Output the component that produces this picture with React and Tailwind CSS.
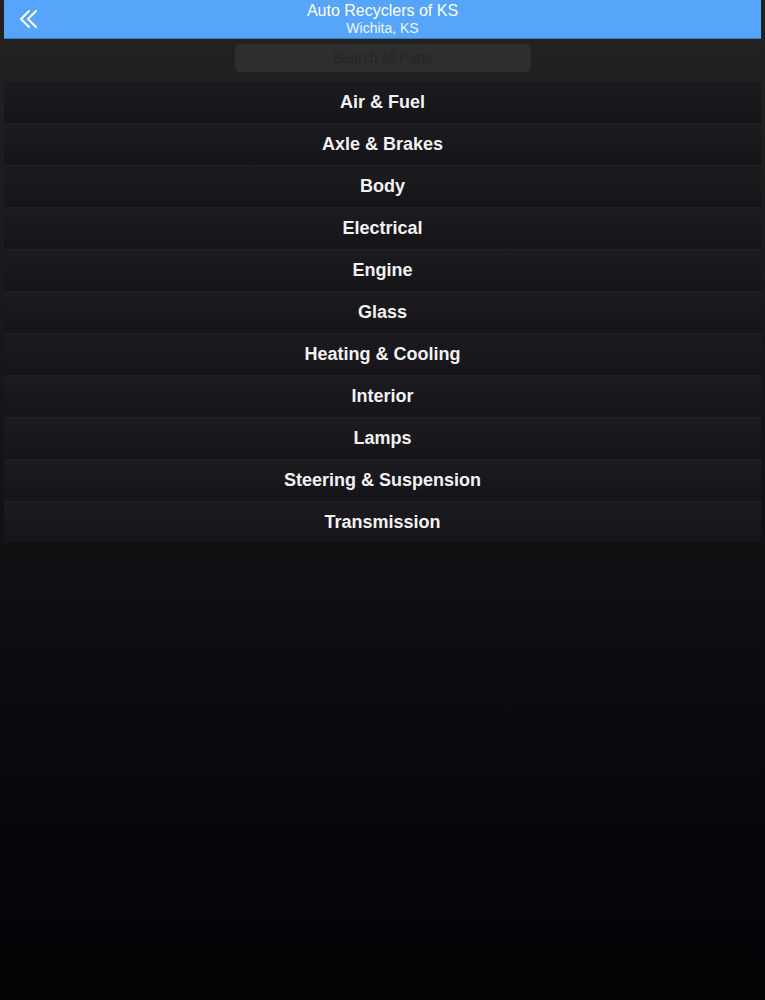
import React from 'react';

const categories = [
  'Air & Fuel',
  'Axle & Brakes',
  'Body',
  'Electrical',
  'Engine',
  'Glass',
  'Heating & Cooling',
  'Interior',
  'Lamps',
  'Steering & Suspension',
  'Transmission',
];

const BackIcon = () => (
  <svg width="22" height="22" viewBox="0 0 22 22" fill="none" stroke="#ffffff" strokeWidth="2" strokeLinecap="round" strokeLinejoin="round">
    <path d="M11 3 L3 11 L11 19" />
    <path d="M18 3 L10 11 L18 19" />
  </svg>
);

export default function App() {
  return (
    <div
      className="min-h-[1000px] w-full bg-gradient-to-b from-[#232323] via-[#131215] to-[#040306] px-1"
      style={{ fontFamily: '"Liberation Sans", Arial, sans-serif' }}
    >
      {/* Top bar */}
      <div className="relative h-[39px] bg-[#56a5fb] flex flex-col items-center justify-center border-b border-[#3b7ac0]">
        <button className="absolute left-[14px] top-[8px]">
          <BackIcon />
        </button>
        <div className="text-white text-[16px] leading-[18px]">Auto Recyclers of KS</div>
        <div className="text-white/90 text-[14px] leading-[16px]">Wichita, KS</div>
      </div>

      {/* Search */}
      <div className="h-[42px] flex justify-center pt-[5px]">
        <div className="w-[296px] h-[28px] rounded-md bg-[#2e2e2e] flex items-center justify-center">
          <span className="text-[14px] text-[#242424]">Search all Parts</span>
        </div>
      </div>

      {/* Category list */}
      <div className="flex flex-col">
        {categories.map((name) => (
          <div
            key={name}
            className="h-[42px] flex items-center justify-center border-t border-[#201f23] bg-gradient-to-b from-[#1c1b1f] to-[#151418]"
          >
            <span className="text-[#f2f2f2] text-[18px] font-bold">{name}</span>
          </div>
        ))}
      </div>
    </div>
  );
}
